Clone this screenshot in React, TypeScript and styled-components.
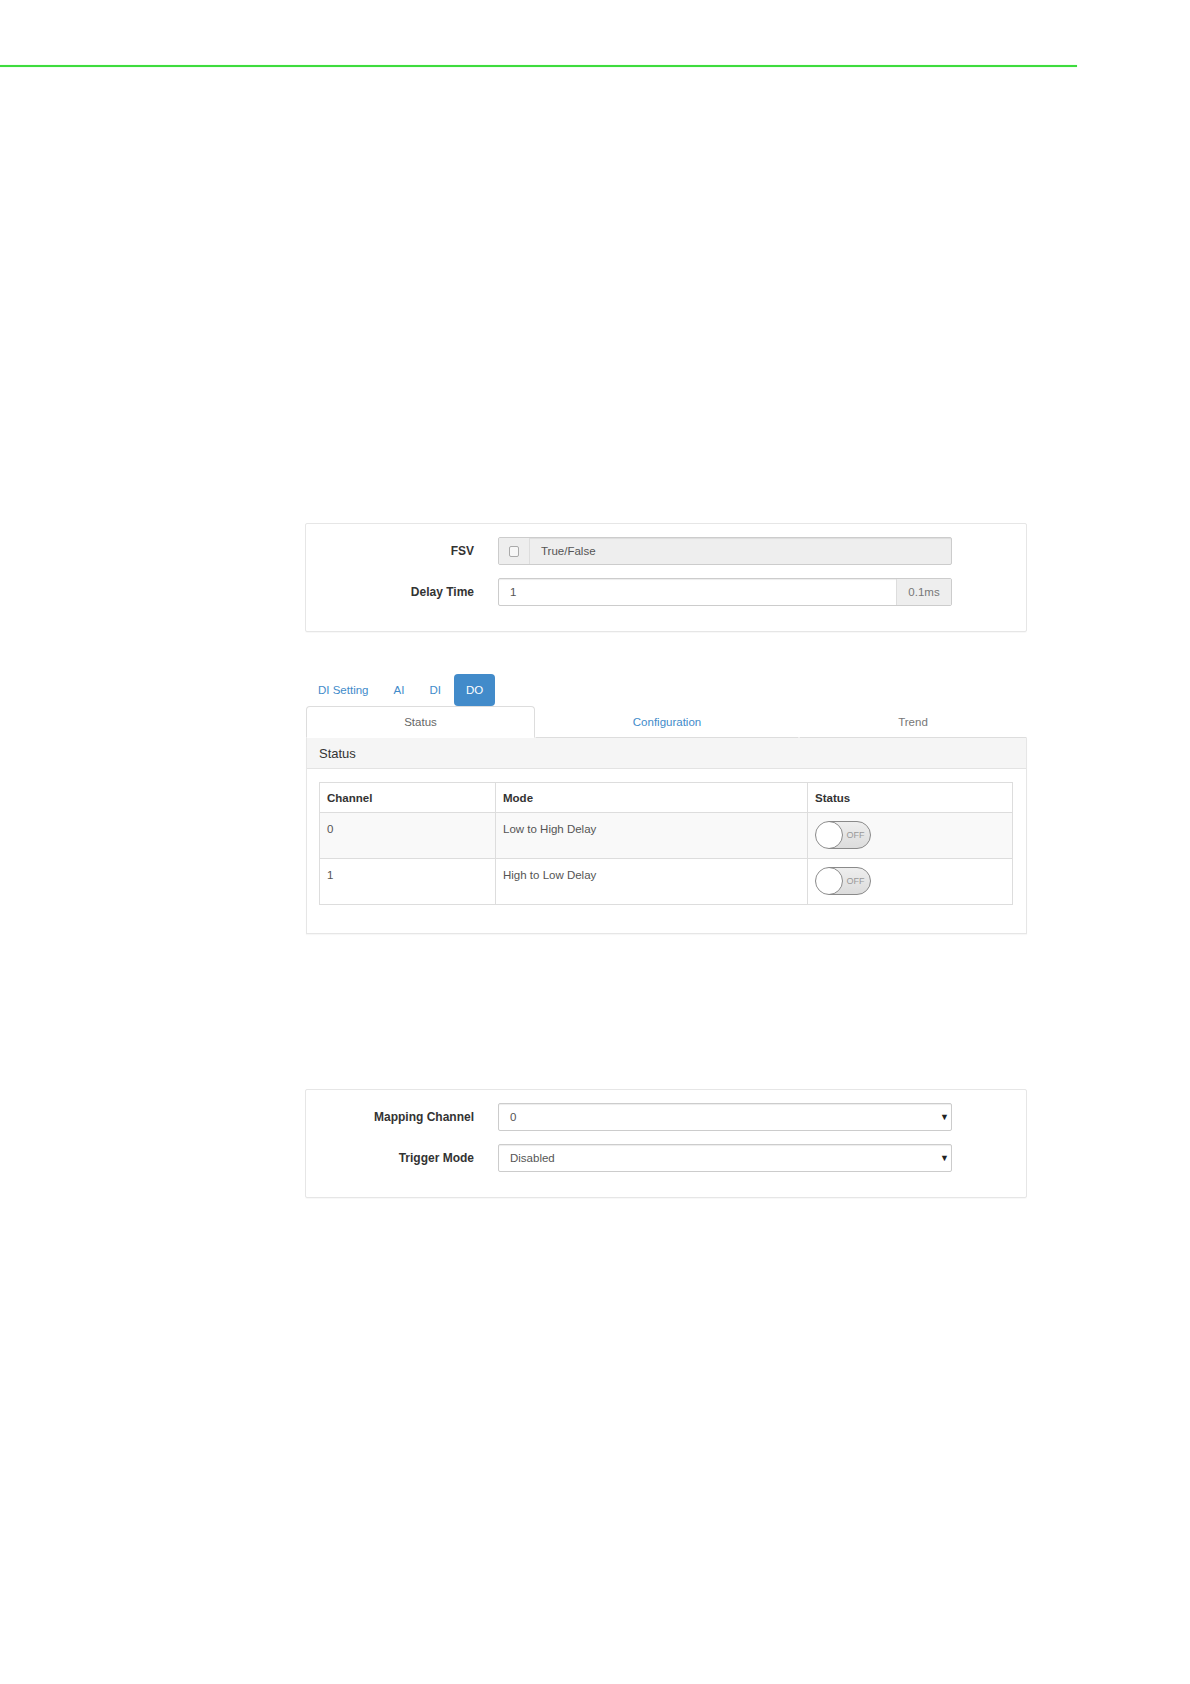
import React from "react";
import styled, { createGlobalStyle } from "styled-components";

const GlobalStyle = createGlobalStyle`
  html, body {
    margin: 0;
    padding: 0;
    background: #ffffff;
  }

  body {
    font-family: "Liberation Sans", Arial, sans-serif;
    font-size: 11.5px;
    color: #555;
  }

  * {
    box-sizing: border-box;
  }
`;

const Page = styled.div`
  width: 1190px;
  min-height: 1684px;
  padding-top: 65px;
`;

const GreenRule = styled.div`
  width: 1077px;
  height: 2px;
  background: #3ddc3d;
  box-shadow: 0 0 1px #8cf08c;
`;

const Content = styled.main`
  width: 722px;
  margin-left: 305px;
  display: flex;
  flex-direction: column;
`;

const FormPanel = styled.section<{ $top: number }>`
  margin-top: ${({ $top }) => $top}px;
  display: flex;
  flex-direction: column;
  gap: 13px;
  padding: 13px 0 25px;
  border: 1px solid #e6e6e6;
  border-radius: 2px;
  box-shadow: 0 1px 1px rgba(0, 0, 0, 0.03);
`;

const FormRow = styled.div`
  display: grid;
  grid-template-columns: 168px 454px;
  column-gap: 24px;
  align-items: center;
`;

const Label = styled.label`
  text-align: right;
  font-size: 12px;
  font-weight: 700;
  color: #333;
`;

const InputGroup = styled.div<{ $readonly?: boolean }>`
  display: flex;
  align-items: stretch;
  height: 28px;
  border: 1px solid #ccc;
  border-radius: 2px;
  background: ${({ $readonly }) => ($readonly ? "#eeeeee" : "#ffffff")};
  box-shadow: inset 0 1px 1px rgba(0, 0, 0, 0.075);
  overflow: hidden;
`;

const InputValue = styled.div`
  flex: 1;
  display: flex;
  align-items: center;
  padding: 0 11px;
  color: #555;
`;

const Addon = styled.div<{ $side: "left" | "right"; $width: number }>`
  width: ${({ $width }) => $width}px;
  display: flex;
  align-items: center;
  justify-content: center;
  background: #eeeeee;
  color: #777;
  border-left: ${({ $side }) => ($side === "right" ? "1px solid #ddd" : "0")};
  border-right: ${({ $side }) => ($side === "left" ? "1px solid #ddd" : "0")};
`;

const CheckBox = styled.span`
  width: 10px;
  height: 11px;
  border: 1px solid #aaa;
  border-radius: 2px;
  background: #f7f7f7;
`;

const SelectArrow = styled.span`
  display: flex;
  align-items: center;
  font-size: 9px;
  color: #222;
  padding-right: 2px;
`;

const Pills = styled.nav`
  margin-top: 42px;
  display: flex;
  gap: 1px;
  padding-left: 1px;
`;

const Pill = styled.span<{ $active?: boolean }>`
  height: 32px;
  line-height: 32px;
  padding: 0 12px;
  border-radius: 4px;
  color: ${({ $active }) => ($active ? "#ffffff" : "#428bca")};
  background: ${({ $active }) => ($active ? "#428bca" : "transparent")};
`;

const SubTabs = styled.div`
  display: grid;
  grid-template-columns: 229px 264px 1fr;
  height: 32px;
  margin-left: 1px;
`;

const SubTab = styled.span<{ $active?: boolean; $tone: string }>`
  display: flex;
  align-items: center;
  justify-content: center;
  color: ${({ $tone }) => $tone};
  background: #fff;
  border: 1px solid ${({ $active }) => ($active ? "#ddd" : "transparent")};
  border-bottom: 1px solid ${({ $active }) => ($active ? "transparent" : "#ddd")};
  border-radius: ${({ $active }) => ($active ? "4px 4px 0 0" : "0")};
`;

const StatusPanel = styled.section`
  margin-left: 1px;
  border: 1px solid #e6e6e6;
  border-top: 0;
  box-shadow: 0 1px 1px rgba(0, 0, 0, 0.03);
`;

const PanelHeading = styled.header`
  height: 31px;
  display: flex;
  align-items: center;
  padding-left: 12px;
  background: #f5f5f5;
  border-bottom: 1px solid #e3e3e3;
  font-size: 13px;
  color: #333;
`;

const PanelBody = styled.div`
  padding: 13px 13px 28px 12px;
`;

const Table = styled.table`
  width: 100%;
  border-collapse: collapse;
  border: 1px solid #ddd;
  table-layout: fixed;

  th {
    height: 30px;
    padding: 0 7px;
    text-align: left;
    font-weight: 700;
    color: #333;
    border: 1px solid #ddd;
  }

  td {
    height: 46px;
    padding: 8px 7px;
    line-height: 16px;
    vertical-align: top;
    border: 1px solid #ddd;
    color: #555;
  }

  tbody tr:nth-child(odd) td {
    background: #f9f9f9;
  }
`;

const Toggle = styled.span`
  display: flex;
  align-items: center;
  width: 56px;
  height: 28px;
  border: 1px solid #8a8a8a;
  border-radius: 14px;
  background: linear-gradient(#eeeeee, #dcdcdc);
  overflow: hidden;
`;

const Knob = styled.span`
  width: 28px;
  height: 28px;
  margin: -1px 0 0 -1px;
  border: 1px solid #8a8a8a;
  border-radius: 50%;
  background: #fff;
`;

const ToggleText = styled.span`
  flex: 1;
  text-align: center;
  font-size: 9px;
  color: #999;
  padding-right: 2px;
`;

const channels = [
  { channel: "0", mode: "Low to High Delay" },
  { channel: "1", mode: "High to Low Delay" },
];

const App = () => {
  return (
    <Page>
      <GlobalStyle />
      <GreenRule />
      <Content>
        <FormPanel $top={456}>
          <FormRow>
            <Label>FSV</Label>
            <InputGroup $readonly>
              <Addon $side="left" $width={31}>
                <CheckBox />
              </Addon>
              <InputValue>True/False</InputValue>
            </InputGroup>
          </FormRow>
          <FormRow>
            <Label>Delay Time</Label>
            <InputGroup>
              <InputValue>1</InputValue>
              <Addon $side="right" $width={55}>
                0.1ms
              </Addon>
            </InputGroup>
          </FormRow>
        </FormPanel>

        <Pills>
          <Pill>DI Setting</Pill>
          <Pill>AI</Pill>
          <Pill>DI</Pill>
          <Pill $active>DO</Pill>
        </Pills>
        <SubTabs>
          <SubTab $active $tone="#666">
            Status
          </SubTab>
          <SubTab $tone="#428bca">Configuration</SubTab>
          <SubTab $tone="#777">Trend</SubTab>
        </SubTabs>
        <StatusPanel>
          <PanelHeading>Status</PanelHeading>
          <PanelBody>
            <Table>
              <colgroup>
                <col style={{ width: 176 }} />
                <col style={{ width: 312 }} />
                <col />
              </colgroup>
              <thead>
                <tr>
                  <th>Channel</th>
                  <th>Mode</th>
                  <th>Status</th>
                </tr>
              </thead>
              <tbody>
                {channels.map(({ channel, mode }) => (
                  <tr key={channel}>
                    <td>{channel}</td>
                    <td>{mode}</td>
                    <td>
                      <Toggle>
                        <Knob />
                        <ToggleText>OFF</ToggleText>
                      </Toggle>
                    </td>
                  </tr>
                ))}
              </tbody>
            </Table>
          </PanelBody>
        </StatusPanel>

        <FormPanel $top={155}>
          <FormRow>
            <Label>Mapping Channel</Label>
            <InputGroup>
              <InputValue>0</InputValue>
              <SelectArrow>▼</SelectArrow>
            </InputGroup>
          </FormRow>
          <FormRow>
            <Label>Trigger Mode</Label>
            <InputGroup>
              <InputValue>Disabled</InputValue>
              <SelectArrow>▼</SelectArrow>
            </InputGroup>
          </FormRow>
        </FormPanel>
      </Content>
    </Page>
  );
};

export default App;
